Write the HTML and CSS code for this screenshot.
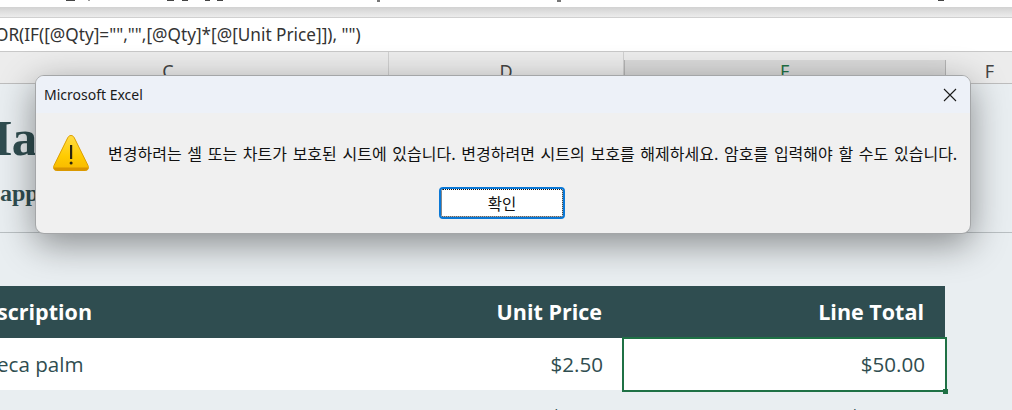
FILE: index.html
```html
<!doctype html>
<html lang="ko">
    <head>
        <meta charset="UTF-8" />
        <meta name="viewport" content="width=device-width, initial-scale=1.0" />
        <title>Microsoft Excel</title>
        <link rel="stylesheet" href="styles.css">
    </head>
    <body>
        <div class="ribbon-edge">
            <i class="tick tick-a"></i>
            <i class="tick tick-b"></i>
            <i class="tick tick-c"></i>
            <i class="tick tick-d"></i>
            <i class="tick tick-e"></i>
            <i class="tick tick-f"></i>
            <i class="tick tick-g"></i>
            <i class="tick tick-h"></i>
            <i class="tick tick-i"></i>
        </div>
        <div class="formula-gap"></div>
        <div class="formula-bar">
            <span class="formula-text">OR(IF([@Qty]="","",[@Qty]*[@[Unit Price]]), "")</span>
        </div>

        <div class="col-headers">
            <div class="col-head col-c">C</div>
            <div class="col-head col-d">D</div>
            <div class="col-head col-e">E</div>
            <div class="col-head col-f">F</div>
        </div>

        <div class="sheet">
            <div class="sheet-title">
                <h1>Ha</h1>
                <p>app</p>
            </div>
            <table class="invoice">
                <thead>
                    <tr>
                        <th class="cell-desc">scription</th>
                        <th class="cell-price">Unit Price</th>
                        <th class="cell-total">Line Total</th>
                    </tr>
                </thead>
                <tbody>
                    <tr class="row-white">
                        <td class="cell-desc">eca palm</td>
                        <td class="cell-price">$2.50</td>
                        <td class="cell-total selected">$50.00<span class="cell-box"><span class="fill-handle"></span></span></td>
                    </tr>
                    <tr>
                        <td class="cell-desc"></td>
                        <td class="cell-price">$4.00</td>
                        <td class="cell-total">$100.00</td>
                    </tr>
                </tbody>
            </table>
        </div>

        <div class="dialog" role="alertdialog">
            <div class="dialog-title">
                <span>Microsoft Excel</span>
                <svg class="close-icon" width="14" height="14" viewBox="0 0 14 14">
                    <path d="M1 1 L13 13 M13 1 L1 13" stroke="#1a1a1a" stroke-width="1.1" fill="none" />
                </svg>
            </div>
            <div class="dialog-body">
                <svg class="warn-icon" width="36" height="36" viewBox="0 0 36 36">
                    <defs>
                        <linearGradient id="warnFill" x1="0" y1="0" x2="0" y2="1">
                            <stop offset="0" stop-color="#ffdc45" />
                            <stop offset="0.6" stop-color="#ffcb00" />
                            <stop offset="1" stop-color="#f7b800" />
                        </linearGradient>
                    </defs>
                    <path d="M18 .5 C19.4 .5 20.4 1.2 21.2 2.6 L35 30.5 C36.2 33 35 35.5 32.5 35.5 L3.5 35.5 C1 35.5 -.2 33 1 30.5 L14.8 2.6 C15.6 1.2 16.6 .5 18 .5 Z" fill="url(#warnFill)" stroke="#dd9f00" stroke-width="1" />
                    <path d="M.8 32.5 C1 34.5 2 35.5 3.5 35.5 L32.5 35.5 C34 35.5 35 34.5 35.2 32.5 Z" fill="#d99400" />
                    <rect x="17" y="10" width="2.2" height="14" fill="#2a2410" />
                    <circle cx="18.1" cy="28" r="1.5" fill="#2a2410" />
                </svg>
                <p class="dialog-msg">변경하려는 셀 또는 차트가 보호된 시트에 있습니다. 변경하려면 시트의 보호를 해제하세요. 암호를 입력해야 할 수도 있습니다.</p>
            </div>
            <div class="dialog-actions">
                <button class="ok-btn">확인</button>
            </div>
        </div>
    </body>
</html>
```

FILE: styles.css
```css
html,
body {
    margin: 0;
    height: 410px;
    overflow: hidden;
}

body {
    position: relative;
    width: 1012px;
    background: #e9eef1;
    font-family: "Noto Sans", sans-serif;
    color: #222;
}

/* what is left of the ribbon above the formula bar */
.ribbon-edge {
    display: flex;
    height: 7px;
    background: #fff;
}

.tick {
    display: block;
    height: 1px;
    background: #444;
}

.tick-a { width: 9px; margin-left: 66px; }
.tick-b { width: 2px; margin-left: 13px; background: #999; }
.tick-c { width: 7px; margin-left: 77px; }
.tick-d { width: 6px; margin-left: 8px; }
.tick-e { width: 5px; margin-left: 17px; }
.tick-f { width: 6px; margin-left: 7px; }
.tick-g { width: 3px; margin-left: 154px; height: 2px; background: #777; }
.tick-h { width: 4px; margin-left: 177px; height: 2px; background: #777; }
.tick-i { width: 6px; margin-left: 377px; }

.formula-gap {
    height: 11px;
    background: linear-gradient(#d2d2d2, #ececec);
    border-bottom: 1px solid #d0d0d0;
    box-sizing: border-box;
}

.formula-bar {
    display: flex;
    align-items: center;
    height: 34px;
    box-sizing: border-box;
    background: #fff;
    border-bottom: 1px solid #c8c8c8;
    overflow: hidden;
}

.formula-text {
    margin-left: -5px;
    font-size: 17.2px;
    color: #333;
    white-space: nowrap;
}

.col-headers {
    display: flex;
    height: 32px;
    box-sizing: border-box;
    background: #ececec;
    border-bottom: 1px solid #bdbdbd;
}

.col-head {
    flex: none;
    padding-top: 8px;
    box-sizing: border-box;
    text-align: center;
    font-size: 18px;
    line-height: 22px;
    color: #444;
    border-right: 1px solid #d0d0d0;
}

.col-c { width: 389px; padding-right: 52px; }
.col-d { width: 235px; }
.col-e {
    width: 322px;
    margin-top: 8px;
    padding-top: 0;
    background: #dadada;
    color: #1f7145;
    border-left: 1px solid #b5b5b5;
    border-right-color: #b5b5b5;
}
.col-f { width: 66px; border-right: 0; text-indent: 21px; }

.sheet {
    height: 326px;
    overflow: hidden;
}

.sheet-title {
    height: 149px;
    box-sizing: border-box;
    border-bottom: 1px solid #b9bfc2;
    font-family: "Liberation Serif", serif;
    color: #2f4d50;
    margin-bottom: 53px;
}

.sheet-title h1 {
    margin: 0 0 0 -28px;
    padding-top: 26px;
    font-size: 51px;
    line-height: 56px;
    font-weight: bold;
}

.sheet-title p {
    margin: 0;
    padding-top: 13px;
    font-size: 24px;
    line-height: 28px;
    font-weight: bold;
}

.invoice {
    width: 945px;
    border-collapse: collapse;
    table-layout: fixed;
    font-family: "Open Sans", sans-serif;
}

.invoice th {
    height: 50px;
    padding: 0 0 2px;
    background: #2f4d50;
    color: #fff;
    font-size: 21.5px;
    font-weight: bold;
}

.invoice td {
    height: 52px;
    padding: 0;
    font-size: 20.6px;
    color: #2f4d50;
}

.row-white td {
    background: #fff;
}

.invoice .cell-desc {
    width: 300px;
    text-align: left;
    text-indent: -3px;
}

.invoice th.cell-price,
.invoice th.cell-total {
    padding-right: 21px;
}

.invoice .cell-price {
    width: 323px;
    padding-right: 20px;
    text-align: right;
    box-sizing: border-box;
}

.invoice .cell-total {
    width: 322px;
    padding-right: 20px;
    text-align: right;
    box-sizing: border-box;
}

.selected {
    position: relative;
}

.cell-box {
    position: absolute;
    left: -1px;
    top: -1px;
    right: -2px;
    bottom: -2px;
    border: 2px solid #1f7145;
}

.fill-handle {
    position: absolute;
    right: -3px;
    bottom: -4px;
    width: 5px;
    height: 5px;
    background: #1f7145;
}

/* message box */
.dialog {
    position: absolute;
    left: 35px;
    top: 75px;
    width: 936px;
    height: 159px;
    box-sizing: border-box;
    border: 1px solid #a4a6a8;
    border-radius: 9px;
    background: #f0f0f0;
    box-shadow: 0 10px 36px rgba(0, 0, 0, 0.42);
    overflow: hidden;
    font-family: "Noto Sans", "Noto Sans CJK KR", sans-serif;
}

.dialog-title {
    display: flex;
    align-items: center;
    justify-content: space-between;
    height: 37px;
    padding: 0 13px 0 8px;
    background: #edf1f8;
    font-size: 14px;
    color: #1a1a1a;
}

.close-icon {
    display: block;
}

.dialog-body {
    display: flex;
    align-items: flex-start;
    height: 74px;
    padding: 22px 0 0 17px;
    box-sizing: border-box;
}

.warn-icon {
    flex: none;
}

.dialog-msg {
    margin: 6px 0 0 19px;
    font-family: "Noto Sans CJK KR", sans-serif;
    font-size: 16px;
    line-height: 24px;
    word-spacing: 1.2px;
    color: #111;
    white-space: nowrap;
}

.dialog-actions {
    display: flex;
    justify-content: center;
}

.ok-btn {
    width: 126px;
    height: 32px;
    padding: 0;
    margin-left: -2px;
    background: #fff;
    border: 2px solid #0a78d6;
    border-radius: 4px;
    outline: 1px dotted #111;
    outline-offset: -3px;
    font-family: "Noto Sans CJK KR", sans-serif;
    font-size: 15.5px;
    color: #111;
}
```
